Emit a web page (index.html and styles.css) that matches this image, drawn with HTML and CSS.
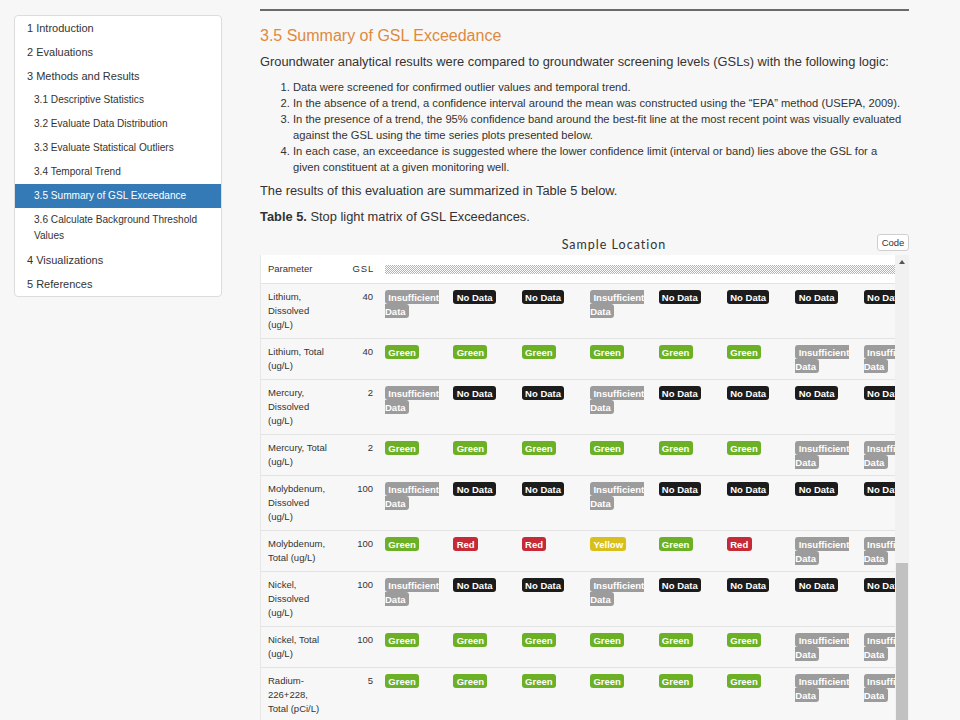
FILE: index.html
```html
<!DOCTYPE html>
<html lang="en">
<head>
<meta charset="utf-8">
<title>3.5 Summary of GSL Exceedance</title>
<link rel="stylesheet" href="styles.css">
</head>
<body>
<div class="page">
  <nav class="toc">
    <a class="toc-item">1 Introduction</a>
    <a class="toc-item">2 Evaluations</a>
    <a class="toc-item">3 Methods and Results</a>
    <a class="toc-item sub">3.1 Descriptive Statistics</a>
    <a class="toc-item sub">3.2 Evaluate Data Distribution</a>
    <a class="toc-item sub">3.3 Evaluate Statistical Outliers</a>
    <a class="toc-item sub">3.4 Temporal Trend</a>
    <a class="toc-item sub active">3.5 Summary of GSL Exceedance</a>
    <a class="toc-item sub">3.6 Calculate Background Threshold Values</a>
    <a class="toc-item">4 Visualizations</a>
    <a class="toc-item">5 References</a>
  </nav>
  <main class="main">
    <div class="rule"></div>
    <h2 class="title">3.5 Summary of GSL Exceedance</h2>
    <p class="lead">Groundwater analytical results were compared to groundwater screening levels (GSLs) with the following logic:</p>
    <ol class="steps">
      <li>Data were screened for confirmed outlier values and temporal trend.</li>
      <li>In the absence of a trend, a confidence interval around the mean was constructed using the “EPA” method (USEPA, 2009).</li>
      <li>In the presence of a trend, the 95% confidence band around the best-fit line at the most recent point was visually evaluated against the GSL using the time series plots presented below.</li>
      <li>In each case, an exceedance is suggested where the lower confidence limit (interval or band) lies above the GSL for a given constituent at a given monitoring well.</li>
    </ol>
    <p class="lead">The results of this evaluation are summarized in Table 5 below.</p>
    <p class="lead caption"><b>Table 5.</b> Stop light matrix of GSL Exceedances.</p>
    <div class="caption-row">
      <div class="sample">Sample Location</div>
      <button class="code-btn">Code</button>
    </div>
    <div class="table-wrap">
      <div class="viewport">
        <table class="matrix">
          <colgroup>
            <col class="c-param"><col class="c-gsl">
            <col class="c-data"><col class="c-data"><col class="c-data"><col class="c-data"><col class="c-data"><col class="c-data"><col class="c-data"><col class="c-data">
          </colgroup>
          <thead>
            <tr>
              <th class="param">Parameter</th>
              <th class="gsl">GSL</th>
              <th class="hatch-cell" colspan="8"><div class="hatch"></div></th>
            </tr>
          </thead>
          <tbody>
            <tr>
              <td class="param">Lithium, Dissolved (ug/L)</td><td class="gsl">40</td>
              <td><span class="lb i">Insufficient Data</span></td><td><span class="lb k">No Data</span></td><td><span class="lb k">No Data</span></td><td><span class="lb i">Insufficient Data</span></td><td><span class="lb k">No Data</span></td><td><span class="lb k">No Data</span></td><td><span class="lb k">No Data</span></td><td><span class="lb k">No Data</span></td>
            </tr>
            <tr>
              <td class="param">Lithium, Total (ug/L)</td><td class="gsl">40</td>
              <td><span class="lb g">Green</span></td><td><span class="lb g">Green</span></td><td><span class="lb g">Green</span></td><td><span class="lb g">Green</span></td><td><span class="lb g">Green</span></td><td><span class="lb g">Green</span></td><td><span class="lb i">Insufficient Data</span></td><td><span class="lb i">Insufficient Data</span></td>
            </tr>
            <tr>
              <td class="param">Mercury, Dissolved (ug/L)</td><td class="gsl">2</td>
              <td><span class="lb i">Insufficient Data</span></td><td><span class="lb k">No Data</span></td><td><span class="lb k">No Data</span></td><td><span class="lb i">Insufficient Data</span></td><td><span class="lb k">No Data</span></td><td><span class="lb k">No Data</span></td><td><span class="lb k">No Data</span></td><td><span class="lb k">No Data</span></td>
            </tr>
            <tr>
              <td class="param">Mercury, Total (ug/L)</td><td class="gsl">2</td>
              <td><span class="lb g">Green</span></td><td><span class="lb g">Green</span></td><td><span class="lb g">Green</span></td><td><span class="lb g">Green</span></td><td><span class="lb g">Green</span></td><td><span class="lb g">Green</span></td><td><span class="lb i">Insufficient Data</span></td><td><span class="lb i">Insufficient Data</span></td>
            </tr>
            <tr>
              <td class="param">Molybdenum, Dissolved (ug/L)</td><td class="gsl">100</td>
              <td><span class="lb i">Insufficient Data</span></td><td><span class="lb k">No Data</span></td><td><span class="lb k">No Data</span></td><td><span class="lb i">Insufficient Data</span></td><td><span class="lb k">No Data</span></td><td><span class="lb k">No Data</span></td><td><span class="lb k">No Data</span></td><td><span class="lb k">No Data</span></td>
            </tr>
            <tr>
              <td class="param">Molybdenum, Total (ug/L)</td><td class="gsl">100</td>
              <td><span class="lb g">Green</span></td><td><span class="lb r">Red</span></td><td><span class="lb r">Red</span></td><td><span class="lb y">Yellow</span></td><td><span class="lb g">Green</span></td><td><span class="lb r">Red</span></td><td><span class="lb i">Insufficient Data</span></td><td><span class="lb i">Insufficient Data</span></td>
            </tr>
            <tr>
              <td class="param">Nickel, Dissolved (ug/L)</td><td class="gsl">100</td>
              <td><span class="lb i">Insufficient Data</span></td><td><span class="lb k">No Data</span></td><td><span class="lb k">No Data</span></td><td><span class="lb i">Insufficient Data</span></td><td><span class="lb k">No Data</span></td><td><span class="lb k">No Data</span></td><td><span class="lb k">No Data</span></td><td><span class="lb k">No Data</span></td>
            </tr>
            <tr>
              <td class="param">Nickel, Total (ug/L)</td><td class="gsl">100</td>
              <td><span class="lb g">Green</span></td><td><span class="lb g">Green</span></td><td><span class="lb g">Green</span></td><td><span class="lb g">Green</span></td><td><span class="lb g">Green</span></td><td><span class="lb g">Green</span></td><td><span class="lb i">Insufficient Data</span></td><td><span class="lb i">Insufficient Data</span></td>
            </tr>
            <tr>
              <td class="param">Radium-226+228, Total (pCi/L)</td><td class="gsl">5</td>
              <td><span class="lb g">Green</span></td><td><span class="lb g">Green</span></td><td><span class="lb g">Green</span></td><td><span class="lb g">Green</span></td><td><span class="lb g">Green</span></td><td><span class="lb g">Green</span></td><td><span class="lb i">Insufficient Data</span></td><td><span class="lb i">Insufficient Data</span></td>
            </tr>
          </tbody>
        </table>
      </div>
      <div class="scrollbar">
        <div class="arrow"></div>
        <div class="thumb"></div>
      </div>
    </div>
  </main>
</div>
</body>
</html>
```
FILE: styles.css
```css
html, body {
  margin: 0;
  padding: 0;
  height: 720px;
  overflow: hidden;
  background: #f7f7f7;
  color: #333;
  font-family: "Liberation Sans", Arial, sans-serif;
}

.page {
  display: flex;
  align-items: flex-start;
  gap: 38px;
  padding-left: 14px;
}

/* TOC */
.toc {
  width: 206px;
  margin-top: 15px;
  background: #fff;
  border: 1px solid #dcdcdc;
  border-radius: 4px;
  display: flex;
  flex-direction: column;
  flex-shrink: 0;
}
.toc-item {
  display: block;
  padding: 4px 8px 4px 12px;
  font-size: 11px;
  line-height: 16px;
  color: #333;
}
.toc-item:first-child {
  padding-top: 4px;
}
.toc-item.sub {
  font-size: 10.1px;
  padding-left: 19px;
}
.toc-item.active {
  background: #337ab7;
  color: #fff;
}

/* main */
.main {
  width: 649px;
  flex-shrink: 0;
}
.rule {
  margin-top: 9px;
  border-top: 2px solid #6a6a6a;
}
.title {
  margin: 15px 0 0;
  font-size: 16px;
  line-height: 20px;
  font-weight: normal;
  color: #dd8a40;
}
.lead {
  margin: 7px 0 0;
  font-size: 12.85px;
  line-height: 18px;
}
.caption {
  margin-top: 8px;
}
.steps {
  margin: 8px 0 0;
  padding-left: 33px;
  padding-right: 4px;
  font-size: 11.2px;
  line-height: 16px;
}
.caption-row {
  display: flex;
  align-items: flex-start;
  height: 29px;
}
.sample {
  flex: 1;
  padding-top: 10px;
  padding-left: 91px;
  text-align: center;
  font-family: Lato, "Liberation Sans", sans-serif;
  font-size: 12.5px;
  line-height: 18px;
  letter-spacing: 1px;
  color: #333;
}
.code-btn {
  margin-top: 8px;
  height: 17px;
  width: 32px;
  padding: 0;
  border: 1px solid #cfcfcf;
  border-radius: 3px;
  background: #fff;
  color: #333;
  font-family: "Liberation Sans", Arial, sans-serif;
  font-size: 9.5px;
}

/* table */
.table-wrap {
  display: flex;
  height: 470px;
  border-left: 1px solid #e6e6e6;
}
.viewport {
  flex: 1;
  overflow: hidden;
}
.matrix {
  table-layout: fixed;
  width: 665px;
  border-collapse: collapse;
  font-size: 9.5px;
  line-height: 14px;
  color: #333;
}
.c-param { width: 72px; }
.c-gsl { width: 46px; }
.c-data { width: 68.4px; }
.matrix th {
  background: #fff;
  font-weight: normal;
  text-align: left;
  padding: 7px 6px;
  vertical-align: middle;
}
.matrix td {
  padding: 6px 6px;
  border-top: 1px solid #e3e3e3;
  vertical-align: top;
  overflow: hidden;
}
.matrix .param {
  padding-left: 7px;
}
.matrix .gsl {
  text-align: right;
}
.matrix th.gsl {
  letter-spacing: 0.8px;
  padding-right: 5px;
}
.hatch {
  height: 9px;
  background: repeating-conic-gradient(#b3b3b3 0 25%, #ffffff 0 50%) 0 0 / 2px 2px;
}

.lb {
  padding: 1.5px 3.3px 2px;
  border-radius: 3px;
  color: #fff;
  font-weight: bold;
}
.lb.g { background: #6cb026; }
.lb.r { background: #c52a36; }
.lb.y { background: #d8bf1c; }
.lb.k { background: #1c1c1c; }
.lb.i { background: #9c9c9c; }

.scrollbar {
  width: 14px;
  flex-shrink: 0;
  background: #f1f1f1;
  display: flex;
  flex-direction: column;
  align-items: center;
}
.arrow {
  margin-top: 5px;
  width: 0;
  height: 0;
  border-left: 3px solid transparent;
  border-right: 3px solid transparent;
  border-bottom: 4px solid #555;
}
.thumb {
  margin-top: 299px;
  width: 12px;
  flex: 1;
  background: #c1c1c1;
}
```
